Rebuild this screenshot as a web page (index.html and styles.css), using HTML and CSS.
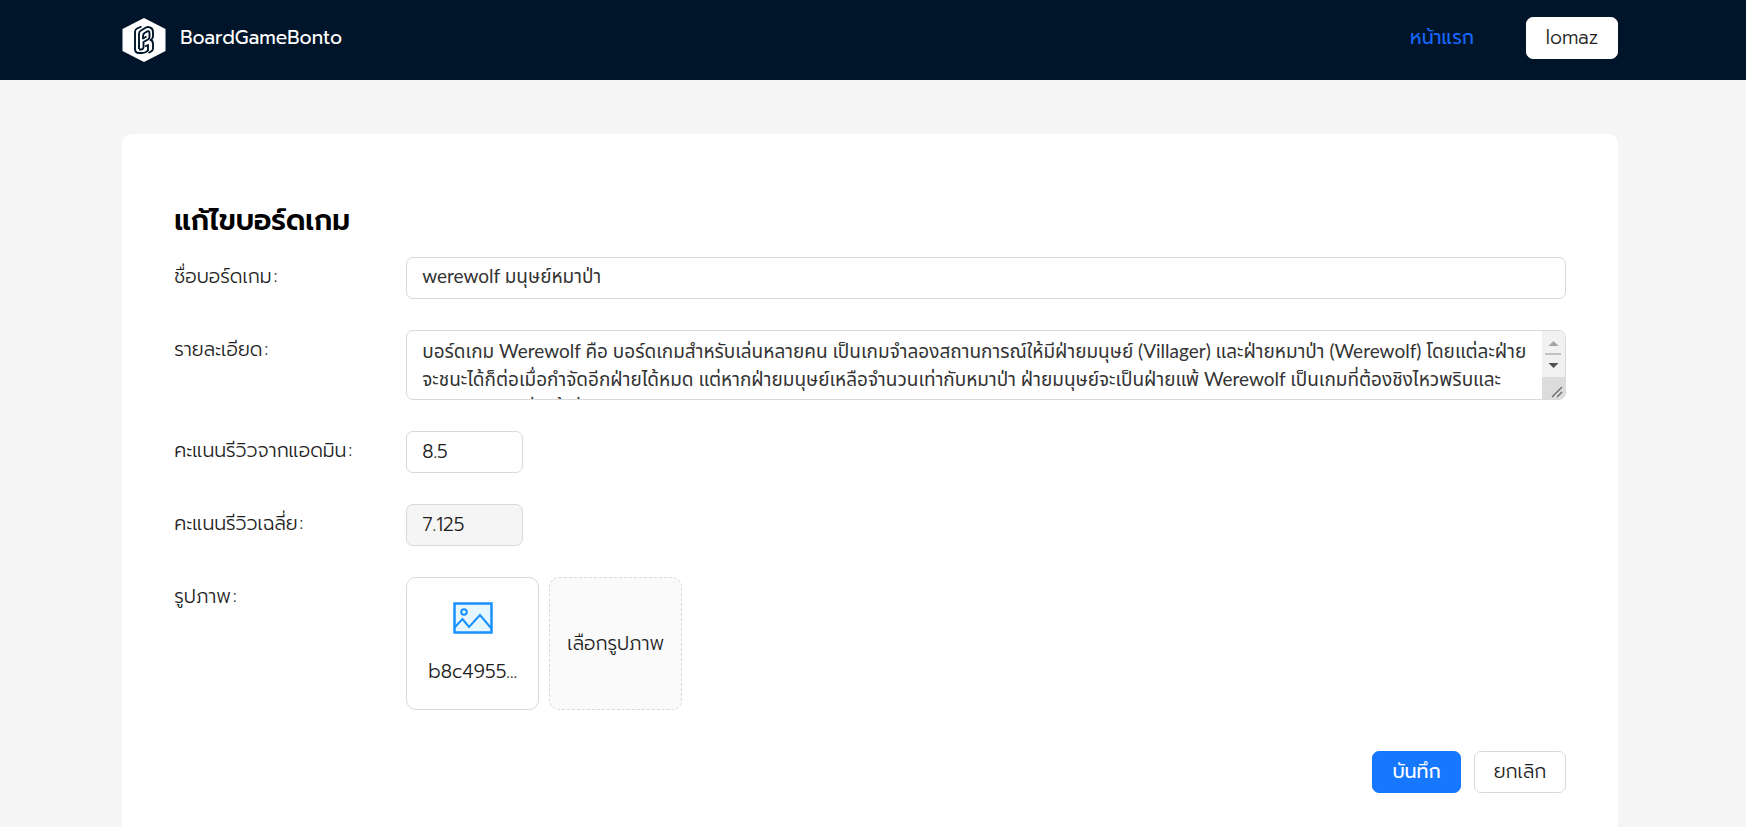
FILE: index.html
```html
<!DOCTYPE html>
<html lang="th">
<head>
<meta charset="utf-8">
<meta name="viewport" content="width=device-width, initial-scale=1">
<title>BoardGameBonto</title>
<link rel="stylesheet" href="styles.css">
</head>
<body>
<header class="topbar">
  <a class="brand" href="#">
    <svg class="brand-logo" viewBox="0 0 44 44" aria-hidden="true">
      <path fill="#fff" d="M22 0 43.500 11V33L22 44 .5 33V11z"/>
      <g fill="none" stroke="#001529" stroke-width="1.900" stroke-linejoin="round">
        <path d="M19.500 8.500 15 10.500Q13 11.500 13 14V31Q13 35 17 35H20Q22 35 24 34L26 32.500V27L23 28.500"/>
        <path d="M17 31V16Q17 13.500 19 12.500L24 9.500Q26 8.500 28 9.500 31 10.500 31 14V18.500Q31 20.500 28.500 22 31 22.500 31 26V30.500Q31 32.500 29 33.500L26.500 35"/>
        <path d="M17 31.500H19Q21 31.500 21.500 29.500V24L26 21.500Q27.500 20.500 27.500 19V15Q27.500 12.500 25 13.500L22.500 15Q21 16 21 18V20.500L24.500 18.500"/>
      </g>
    </svg>
    <span>BoardGameBonto</span>
  </a>
  <nav class="topnav">
    <a class="home-link" href="#">หน้าแรก</a>
    <button class="btn btn-user" type="button">lomaz</button>
  </nav>
</header>
<main class="page">
  <form class="card">
    <h1 class="title">แก้ไขบอร์ดเกม</h1>
    <div class="row">
      <label class="label" for="name">ชื่อบอร์ดเกม<span class="colon">:</span></label>
      <input class="field prose" id="name" type="text" value="werewolf มนุษย์หมาป่า">
    </div>
    <div class="row">
      <label class="label" for="detail">รายละเอียด<span class="colon">:</span></label>
      <div class="area-wrap">
        <textarea class="field prose area" id="detail">บอร์ดเกม Werewolf คือ บอร์ดเกมสำหรับเล่นหลายคน เป็นเกมจำลองสถานการณ์ให้มีฝ่ายมนุษย์ (Villager) และฝ่ายหมาป่า (Werewolf) โดยแต่ละฝ่าย
จะชนะได้ก็ต่อเมื่อกำจัดอีกฝ่ายได้หมด แต่หากฝ่ายมนุษย์เหลือจำนวนเท่ากับหมาป่า ฝ่ายมนุษย์จะเป็นฝ่ายแพ้ Werewolf เป็นเกมที่ต้องชิงไหวพริบและ
การพูดคุยระหว่างผู้เล่นทุกคน</textarea>
        <svg class="scroller" viewBox="0 0 23 68" aria-hidden="true">
          <path fill="#f1f1f1" d="M0 0h23v68H0z"/>
          <path fill="#dcdcdc" d="M0 46h23v22H0z"/>
          <path fill="#a3a3a3" d="M6.500 15h10L11.500 10z"/>
          <path fill="#c1c1c1" d="M3 22h16v2H3z"/>
          <path fill="#505050" d="M6.500 32h10L11.500 37z"/>
          <path fill="none" stroke="#666" stroke-width="1.200" d="m10 66 10-10M15 66l5-5"/>
        </svg>
      </div>
    </div>
    <div class="row">
      <label class="label" for="admin">คะแนนรีวิวจากแอดมิน<span class="colon">:</span></label>
      <input class="field short" id="admin" type="text" value="8.5">
    </div>
    <div class="row">
      <label class="label" for="average">คะแนนรีวิวเฉลี่ย<span class="colon">:</span></label>
      <input class="field short" id="average" type="text" value="7.125" disabled>
    </div>
    <div class="row">
      <span class="label">รูปภาพ<span class="colon">:</span></span>
      <div class="pictures">
        <a class="tile" href="#">
          <svg class="tile-icon" viewBox="0 0 40 32" aria-hidden="true">
            <path fill="#e6f7ff" stroke="#1890ff" stroke-width="2.500" d="M1.500 1.500h37v29h-37z"/>
            <circle cx="11" cy="10" r="2.800" fill="none" stroke="#1890ff" stroke-width="2"/>
            <path fill="none" stroke="#1890ff" stroke-width="2" d="m2 25 7.500-8 6.500 8 11-12 11 13"/>
          </svg>
          <span>b8c4955...</span>
        </a>
        <button class="tile tile-add" type="button">เลือกรูปภาพ</button>
      </div>
    </div>
    <div class="actions">
      <button class="btn btn-primary" type="submit">บันทึก</button>
      <button class="btn btn-cancel" type="button">ยกเลิก</button>
    </div>
  </form>
</main>
</body>
</html>
```
FILE: styles.css
```css
* { box-sizing: border-box; }
body {
  margin: 0;
  min-height: 100vh;
  background: #f5f5f5;
  color: #1f1f1f;
  font: 300 19px/28px "Prompt", "Noto Sans", "Noto Sans Thai", sans-serif;
}
a { color: inherit; text-decoration: none; }
.topbar {
  display: flex;
  align-items: center;
  justify-content: space-between;
  height: 80px;
  padding: 0 128px 4px 7%;
  background: #001529;
}
.brand {
  display: flex;
  align-items: center;
  gap: 14px;
  color: #fff;
  font-size: 19px;
  font-weight: 400;
}
.brand-logo { width: 44px; height: 44px; margin-top: 4px; }
.topnav { display: flex; align-items: center; gap: 52px; }
.home-link { color: #1668ff; font-weight: 400; }
.btn {
  height: 42px;
  padding: 0 18px;
  border: 1px solid #d9d9d9;
  border-radius: 7px;
  background: #fff;
  color: #1f1f1f;
  font: inherit;
}
.btn-user { min-width: 92px; border-color: #fff; }
.page { padding: 54px 128px 0 7%; }
.card {
  min-height: calc(100vh - 134px);
  padding: 67px 52px 34px;
  border-radius: 10px 10px 0 0;
  background: #fff;
}
.title {
  margin: 0 0 16px;
  color: #000;
  font-size: 28px;
  line-height: 40px;
  font-weight: 600;
}
.row {
  display: grid;
  grid-template-columns: 1fr 5fr;
  align-items: start;
  margin-bottom: 31px;
}
.label { line-height: 40px; }
.colon { margin-left: 2px; }
.field {
  width: 100%;
  height: 42px;
  padding: 0 15px 1px;
  border: 1px solid #d9d9d9;
  border-radius: 7px;
  background: #fff;
  color: #1f1f1f;
  font: inherit;
}
.prose {
  font-family: "Lato", "Noto Sans Thai", sans-serif;
  font-weight: 400;
  color: #333;
}
.field:disabled { background: #f5f5f5; color: #1f1f1f; }
.short { width: 117px; }
.area-wrap { position: relative; }
.area {
  display: block;
  height: 70px;
  padding: 6px 26px 6px 15px;
  line-height: 28px;
  overflow: hidden;
  white-space: pre;
  resize: none;
}
.scroller {
  position: absolute;
  top: 1px;
  right: 1px;
  width: 23px;
  height: 68px;
  border-radius: 0 6px 6px 0;
}
.pictures { display: flex; gap: 10px; }
.tile {
  display: flex;
  flex-direction: column;
  align-items: center;
  justify-content: center;
  gap: 24px;
  width: 133px;
  height: 133px;
  padding: 0;
  border: 1px solid #d9d9d9;
  border-radius: 10px;
}
.tile-icon { width: 40px; height: 32px; }
.tile-add {
  border-style: dashed;
  background: #fafafa;
  color: #1f1f1f;
  font: inherit;
}
.actions { display: flex; justify-content: flex-end; gap: 13px; margin-top: 41px; }
.btn-primary {
  min-width: 89px;
  border-color: #1677ff;
  background: #1677ff;
  color: #fff;
  font-weight: 400;
}
.btn-cancel { min-width: 92px; }
```
